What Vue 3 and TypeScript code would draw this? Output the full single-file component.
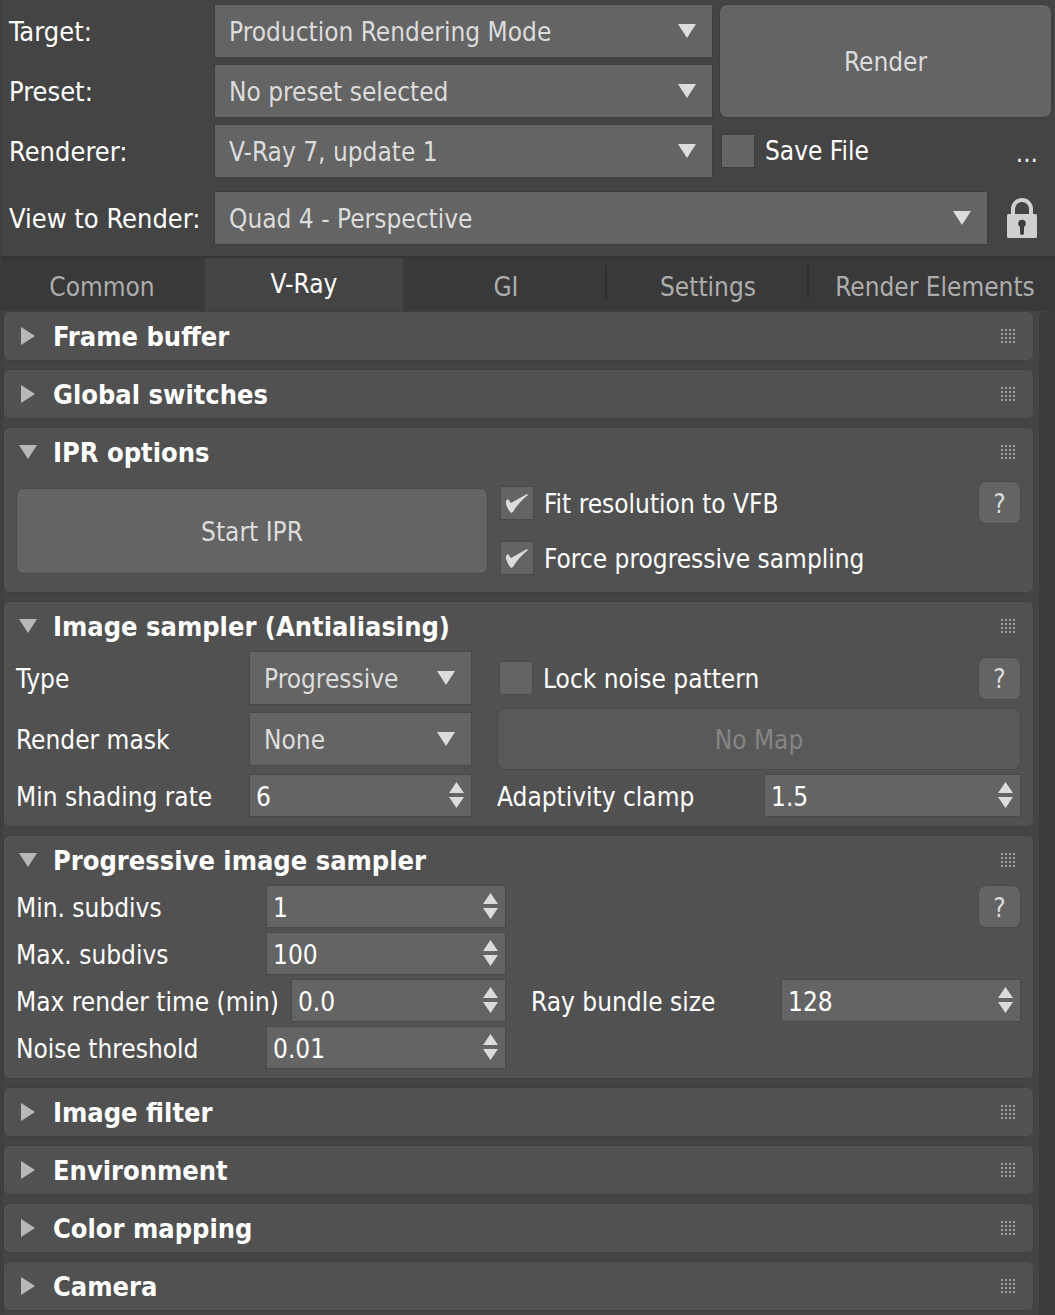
<script setup lang="ts">
import { reactive, ref } from 'vue'

type PanelId = 'frame' | 'global' | 'ipr' | 'sampler' | 'progressive' | 'filter' | 'environment' | 'color' | 'camera'

interface Panel {
  id: PanelId
  title: string
  open: boolean
}

interface Spinner {
  id: string
  label: string
  value: string
  step: number
  decimals: number
}

const header = reactive([
  { id: 'target', label: 'Target:', value: 'Production Rendering Mode' },
  { id: 'preset', label: 'Preset:', value: 'No preset selected' },
  { id: 'renderer', label: 'Renderer:', value: 'V-Ray 7, update 1' },
])

const tabs = ['Common', 'V-Ray', 'GI', 'Settings', 'Render Elements']
const activeTab = ref('V-Ray')

const panels = reactive<Panel[]>([
  { id: 'frame', title: 'Frame buffer', open: false },
  { id: 'global', title: 'Global switches', open: false },
  { id: 'ipr', title: 'IPR options', open: true },
  { id: 'sampler', title: 'Image sampler (Antialiasing)', open: true },
  { id: 'progressive', title: 'Progressive image sampler', open: true },
  { id: 'filter', title: 'Image filter', open: false },
  { id: 'environment', title: 'Environment', open: false },
  { id: 'color', title: 'Color mapping', open: false },
  { id: 'camera', title: 'Camera', open: false },
])

const iprChecks = reactive([
  { id: 'fit', label: 'Fit resolution to VFB', on: true },
  { id: 'force', label: 'Force progressive sampling', on: true },
])

const samplerSelects = [
  { id: 'type', label: 'Type', value: 'Progressive' },
  { id: 'mask', label: 'Render mask', value: 'None' },
]

const shadingRate = reactive<Spinner>({ id: 'rate', label: 'Min shading rate', value: '6', step: 1, decimals: 0 })
const clamp = reactive<Spinner>({ id: 'clamp', label: 'Adaptivity clamp', value: '1.5', step: 0.1, decimals: 1 })
const bundle = reactive<Spinner>({ id: 'bundle', label: 'Ray bundle size', value: '128', step: 1, decimals: 0 })
const progressive = reactive<Spinner[]>([
  { id: 'min', label: 'Min. subdivs', value: '1', step: 1, decimals: 0 },
  { id: 'max', label: 'Max. subdivs', value: '100', step: 1, decimals: 0 },
  { id: 'time', label: 'Max render time (min)', value: '0.0', step: 0.1, decimals: 1 },
  { id: 'noise', label: 'Noise threshold', value: '0.01', step: 0.01, decimals: 2 },
])

const saveFile = ref(false)
const lockNoise = ref(false)

function nudge(s: Spinner, dir: number) {
  s.value = Math.max(0, Number(s.value) + dir * s.step).toFixed(s.decimals)
}
</script>

<template>
  <main class="dialog">
    <section class="top">
      <div class="top-grid">
        <div class="top-fields">
          <div v-for="h in header" :key="h.id" class="top-row">
            <label :for="h.id">{{ h.label }}</label>
            <span class="select">
              <select :id="h.id"><option>{{ h.value }}</option></select>
              <svg width="18" height="14" viewBox="0 0 18 14"><path d="M0 0H18L9 14Z" /></svg>
            </span>
          </div>
        </div>
        <div class="top-side">
          <button type="button" class="btn render">Render</button>
          <div class="save-row">
            <label class="check">
              <span class="box"><input v-model="saveFile" type="checkbox" /><svg viewBox="0 0 34 34"><path d="M6 15L8 13L11 17L27 8L28 9Q18 17 13 26L11 27Q8 24 6 18Z" /></svg></span>
              Save File
            </label>
            <button type="button" class="more" aria-label="Browse">...</button>
          </div>
        </div>
      </div>
      <div class="top-row view-row">
        <label for="view">View to Render:</label>
        <span class="select">
          <select id="view"><option>Quad 4 - Perspective</option></select>
          <svg width="18" height="14" viewBox="0 0 18 14"><path d="M0 0H18L9 14Z" /></svg>
        </span>
        <button type="button" class="lock" aria-label="Lock view">
          <svg width="30" height="40" viewBox="0 0 30 40">
            <path d="M6 18V11a9 9 0 0 1 18 0V18" fill="none" stroke="#cfcfcf" stroke-width="4" />
            <rect y="16" width="30" height="24" rx="1.5" fill="#cfcfcf" />
            <circle cx="15" cy="25.5" r="3.8" fill="#3d3d3d" />
            <rect x="13" y="26" width="4" height="11" rx="2" fill="#3d3d3d" />
          </svg>
        </button>
      </div>
    </section>

    <nav class="tabs" role="tablist">
      <button
        v-for="t in tabs"
        :key="t"
        type="button"
        role="tab"
        class="tab"
        :class="{ active: t === activeTab }"
        :aria-selected="t === activeTab"
        @click="activeTab = t"
      >{{ t }}</button>
    </nav>

    <div class="content">
      <div class="panels">
        <section v-for="p in panels" :key="p.id" class="panel">
          <h2 class="panel-head">
            <button type="button" class="panel-toggle" :aria-expanded="p.open" @click="p.open = !p.open">
              <svg v-if="p.open" class="fold" width="18" height="18" viewBox="0 0 18 18"><path d="M0 2H18L9 16Z" /></svg>
              <svg v-else class="fold" width="18" height="18" viewBox="0 0 18 18"><path d="M2 0V18L16 9Z" /></svg>
              <span class="panel-title">{{ p.title }}</span>
            </button>
            <span class="grip"></span>
          </h2>

          <div v-if="p.open && p.id === 'ipr'" class="body ipr">
            <button type="button" class="btn start">Start IPR</button>
            <div class="ipr-checks">
              <label v-for="c in iprChecks" :key="c.id" class="check">
                <span class="box"><input v-model="c.on" type="checkbox" /><svg viewBox="0 0 34 34"><path d="M6 15L8 13L11 17L27 8L28 9Q18 17 13 26L11 27Q8 24 6 18Z" /></svg></span>
                <span class="check-text">{{ c.label }}</span>
              </label>
            </div>
            <button type="button" class="btn help">?</button>
          </div>

          <div v-if="p.open && p.id === 'sampler'" class="body sampler">
            <div class="col-left">
              <div v-for="s in samplerSelects" :key="s.id" class="row">
                <label :for="s.id">{{ s.label }}</label>
                <span class="select">
                  <select :id="s.id"><option>{{ s.value }}</option></select>
                  <svg width="18" height="14" viewBox="0 0 18 14"><path d="M0 0H18L9 14Z" /></svg>
                </span>
              </div>
              <div class="row short">
                <label :for="shadingRate.id">{{ shadingRate.label }}</label>
                <span class="spin">
                  <input :id="shadingRate.id" v-model="shadingRate.value" type="text" inputmode="decimal" />
                  <span class="steps">
                    <button type="button" aria-label="Increase" @click="nudge(shadingRate, 1)"><svg width="15" height="11" viewBox="0 0 15 11"><path d="M0 11L7.5 0L15 11Z" /></svg></button>
                    <button type="button" aria-label="Decrease" @click="nudge(shadingRate, -1)"><svg width="15" height="11" viewBox="0 0 15 11"><path d="M0 0H15L7.5 11Z" /></svg></button>
                  </span>
                </span>
              </div>
            </div>
            <div class="col-right">
              <div class="row spread">
                <label class="check">
                  <span class="box"><input v-model="lockNoise" type="checkbox" /><svg viewBox="0 0 34 34"><path d="M6 15L8 13L11 17L27 8L28 9Q18 17 13 26L11 27Q8 24 6 18Z" /></svg></span>
                  <span class="check-text">Lock noise pattern</span>
                </label>
                <button type="button" class="btn help">?</button>
              </div>
              <button type="button" class="btn map" disabled>No Map</button>
              <div class="row short">
                <label :for="clamp.id">{{ clamp.label }}</label>
                <span class="spin">
                  <input :id="clamp.id" v-model="clamp.value" type="text" inputmode="decimal" />
                  <span class="steps">
                    <button type="button" aria-label="Increase" @click="nudge(clamp, 1)"><svg width="15" height="11" viewBox="0 0 15 11"><path d="M0 11L7.5 0L15 11Z" /></svg></button>
                    <button type="button" aria-label="Decrease" @click="nudge(clamp, -1)"><svg width="15" height="11" viewBox="0 0 15 11"><path d="M0 0H15L7.5 11Z" /></svg></button>
                  </span>
                </span>
              </div>
            </div>
          </div>

          <div v-if="p.open && p.id === 'progressive'" class="body progressive">
            <div class="col-left">
              <div v-for="s in progressive" :key="s.id" class="row">
                <label :for="s.id">{{ s.label }}</label>
                <span class="spin">
                  <input :id="s.id" v-model="s.value" type="text" inputmode="decimal" />
                  <span class="steps">
                    <button type="button" aria-label="Increase" @click="nudge(s, 1)"><svg width="15" height="11" viewBox="0 0 15 11"><path d="M0 11L7.5 0L15 11Z" /></svg></button>
                    <button type="button" aria-label="Decrease" @click="nudge(s, -1)"><svg width="15" height="11" viewBox="0 0 15 11"><path d="M0 0H15L7.5 11Z" /></svg></button>
                  </span>
                </span>
              </div>
            </div>
            <div class="col-right">
              <button type="button" class="btn help">?</button>
              <div class="row bundle">
                <label :for="bundle.id">{{ bundle.label }}</label>
                <span class="spin">
                  <input :id="bundle.id" v-model="bundle.value" type="text" inputmode="decimal" />
                  <span class="steps">
                    <button type="button" aria-label="Increase" @click="nudge(bundle, 1)"><svg width="15" height="11" viewBox="0 0 15 11"><path d="M0 11L7.5 0L15 11Z" /></svg></button>
                    <button type="button" aria-label="Decrease" @click="nudge(bundle, -1)"><svg width="15" height="11" viewBox="0 0 15 11"><path d="M0 0H15L7.5 11Z" /></svg></button>
                  </span>
                </span>
              </div>
            </div>
          </div>
        </section>
      </div>
      <div class="track"></div>
    </div>
  </main>
</template>

<style>
body {
  background: #444;
}
</style>

<style scoped>
.dialog,
.dialog * {
  box-sizing: border-box;
}

.dialog {
  min-height: 100vh;
  display: flex;
  flex-direction: column;
  border-left: 1px solid #3d3d3d;
  background: #444;
  color: #fff;
  font-family: "DejaVu Sans Condensed", "DejaVu Sans", sans-serif;
  font-size: 26px;
  line-height: 32px;
}

button,
input,
select {
  margin: 0;
  font: inherit;
  color: inherit;
}

label {
  white-space: nowrap;
}

.row > label:not(.check),
.top-row > label,
.check-text,
.panel-title {
  padding-top: 2px;
}

/* Shared controls */
.btn {
  padding: 2px 0 0;
  border: 1px solid #3d3d3d;
  border-radius: 8px;
  background: #646464;
  color: #dcdcdc;
}

.body .btn {
  border-color: #4a4a4a;
}

.help {
  flex: none;
  width: 43px;
  height: 43px;
}

.select {
  position: relative;
  flex: 1;
  min-width: 0;
}

.select select {
  display: block;
  width: 100%;
  height: 54px;
  padding: 2px 40px 0 14px;
  border: 1px solid #3d3d3d;
  border-radius: 0;
  appearance: none;
  background: #646464;
  color: #dcdcdc;
}

.body .select select,
.body .spin input,
.body .box input {
  border-color: #494949;
}

.select svg {
  position: absolute;
  top: 20px;
  right: 17px;
  fill: #dcdcdc;
  pointer-events: none;
}

.spin {
  position: relative;
  flex: 1;
  min-width: 0;
}

.spin input {
  display: block;
  width: 100%;
  height: 43px;
  padding: 2px 30px 0 6px;
  border: 1px solid #494949;
  border-radius: 0;
  background: #646464;
  color: #fff;
}

.steps {
  position: absolute;
  top: 8px;
  right: 8px;
  display: flex;
  flex-direction: column;
  gap: 4px;
}

.steps button {
  display: block;
  height: 11px;
  padding: 0;
  border: 0;
  background: none;
}

.steps svg {
  display: block;
  fill: #dcdcdc;
}

.check {
  display: flex;
  align-items: center;
  gap: 10px;
}

.box {
  position: relative;
  flex: none;
  width: 34px;
  height: 34px;
}

.box input {
  display: block;
  width: 34px;
  height: 34px;
  border: 1px solid #3d3d3d;
  appearance: none;
  background: #646464;
}

.box svg {
  position: absolute;
  inset: 0;
  display: none;
  fill: #dcdcdc;
  pointer-events: none;
}

.box input:checked + svg {
  display: block;
}

/* Render target area */
.top {
  padding: 4px 3px 11px 8px;
}

.top-grid {
  display: flex;
  gap: 6px;
}

.top-fields {
  flex: 3;
  display: flex;
  flex-direction: column;
  gap: 6px;
}

.top-row {
  display: flex;
  align-items: center;
}

.top-row label {
  flex: none;
  width: 205px;
  font-size: 27px;
}

.top-side {
  flex: none;
  width: 333px;
  display: flex;
  flex-direction: column;
  gap: 6px;
}

.render {
  height: 114px;
}

.save-row {
  height: 54px;
  padding: 0 14px 0 2px;
  display: flex;
  align-items: center;
  justify-content: space-between;
}

.more {
  padding: 4px 0 0;
  border: 0;
  background: none;
  color: #e4eaf6;
}

.view-row {
  margin-top: 13px;
}

.lock {
  margin: 0 15px 0 19px;
  padding: 0;
  border: 0;
  background: none;
}

.lock svg {
  display: block;
}

/* Tabs */
.tabs {
  display: flex;
  height: 55px;
  border-top: 2px solid #353535;
  background: #393939;
}

.tab {
  position: relative;
  flex: 202 1 0;
  padding: 5px 0 0;
  border: 0;
  background: none;
  color: #adadad;
  white-space: nowrap;
}

.tab:last-child {
  flex-grow: 240;
  padding-left: 6px;
}

.tab:nth-child(n + 3):not(:last-child)::after {
  content: "";
  position: absolute;
  top: 8px;
  right: 0;
  width: 2px;
  height: 33px;
  background: #2f2f2f;
}

.tab.active {
  flex-grow: 198;
  margin: 0 2px;
  padding: 0 0 1px;
  background: #444;
  color: #fff;
}

/* Rollout panels */
.content {
  flex: 1;
  display: flex;
  gap: 5px;
}

.panels {
  flex: 1;
  min-width: 0;
  margin-left: 1px;
  padding-bottom: 4px;
  border-left: 1px solid #3a3a3a;
  display: flex;
  flex-direction: column;
  gap: 8px;
}

.track {
  flex: none;
  width: 16px;
  border-radius: 8px 0 0 0;
  background: #3c3c3c;
}

.panel {
  border: 1px solid #3f3f3f;
  border-radius: 6px;
  background: #515151;
}

.panel-head {
  height: 48px;
  margin: 0;
  padding: 0 18px 0 15px;
  display: flex;
  align-items: center;
  font-size: 27px;
  font-weight: 700;
}

.panel-toggle {
  flex: 1;
  padding: 0;
  border: 0;
  display: flex;
  align-items: center;
  gap: 16px;
  background: none;
  text-align: left;
}

.fold {
  flex: none;
  fill: #b8b8b8;
}

.grip {
  width: 14px;
  height: 14px;
  background: conic-gradient(from 270deg at 2px 2px, #a0a0a0 90deg, transparent 0) 0 0 / 4px 4px;
}

.body {
  display: flex;
  padding: 1px 12px 9px;
}

.ipr {
  min-height: 116px;
  padding: 5px 12px 12px;
  align-items: center;
}

.start {
  flex: 471 1 0;
  height: 86px;
}

.ipr-checks {
  flex: 479 1 0;
  padding-left: 12px;
  display: flex;
  flex-direction: column;
  gap: 21px;
}

.ipr .help {
  align-self: flex-start;
}

.row {
  display: flex;
  align-items: center;
}

.sampler {
  gap: 25px;
  padding-bottom: 8px;
}

.sampler .col-left {
  flex: 456 1 0;
  display: flex;
  flex-direction: column;
  gap: 7px;
}

.sampler .col-left label {
  flex: none;
  width: 233px;
}

.sampler .col-right {
  flex: 524 1 0;
  display: flex;
  flex-direction: column;
  gap: 3px;
}

.sampler .short {
  height: 45px;
}

.sampler .col-right .short label {
  flex: none;
  width: 267px;
}

.spread {
  height: 54px;
  padding-left: 2px;
  justify-content: space-between;
}

.map {
  height: 62px;
}

.map:disabled {
  background: #595959;
  color: #858585;
}

.progressive {
  gap: 25px;
}

.progressive .col-left {
  flex: 1 1 0;
  display: flex;
  flex-direction: column;
  gap: 4px;
}

.progressive .col-left label {
  flex: none;
  min-width: 250px;
  padding-right: 12px;
}

.progressive .col-right {
  flex: 1 1 0;
  display: flex;
  flex-direction: column;
  gap: 51px;
}

.progressive .help {
  align-self: flex-end;
}

.bundle label {
  flex: none;
  width: 250px;
}
</style>
